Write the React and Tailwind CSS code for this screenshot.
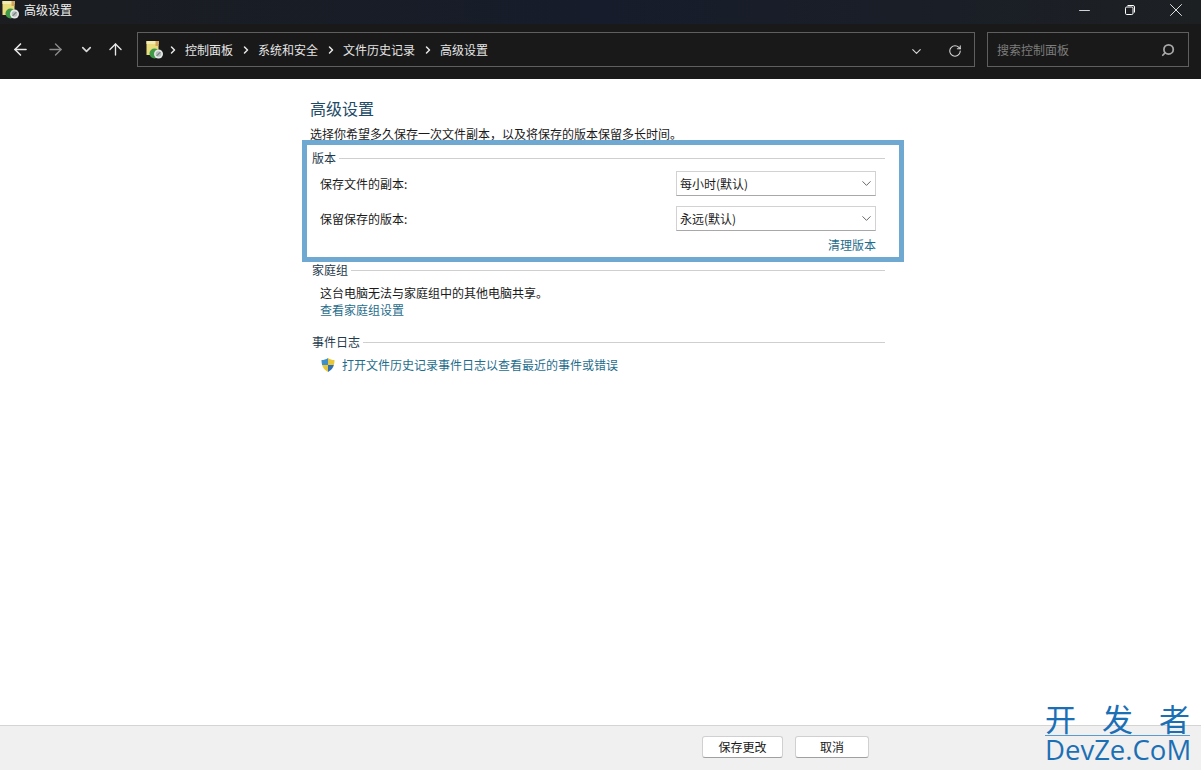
import { ArrowLeft, ArrowRight, ArrowUp, ChevronDown, ChevronRight, Minus, RotateCw, Search, X } from "lucide-react";

const font = { fontFamily: '"Noto Sans CJK SC", "Noto Sans", sans-serif' };

function HistoryIcon({ className = "" }) {
  return (
    <svg width="18" height="18" viewBox="0 0 18 18" className={"shrink-0 " + className}>
      <rect x="0.5" y="0" width="12" height="14" fill="#e9dc7c" />
      <path d="M0.5 0h12v3h-12z" fill="#f3ecae" />
      <path d="M9.500 0h3v5h-3z" fill="#d2a45c" />
      <circle cx="8.500" cy="12.500" r="5" fill="#3f9a47" />
      <circle cx="12.500" cy="13" r="4.500" fill="#e4e8e6" />
      <circle cx="12.500" cy="13" r="2.800" fill="#b4bdbb" />
      <path d="M10.800 14.800l3.400-3.600" stroke="#56625f" strokeWidth="1" fill="none" />
    </svg>
  );
}

function RestoreIcon() {
  return (
    <svg width="12" height="12" viewBox="0 0 12 12" fill="none" stroke="#ffffff" strokeWidth="1">
      <rect x="1.500" y="3" width="7.500" height="7.500" rx="1.200" />
      <path d="M3.500 1.500h5.500a1.500 1.500 0 0 1 1.500 1.500v5.500" />
    </svg>
  );
}

function ShieldIcon() {
  return (
    <svg width="16" height="16" viewBox="0 0 16 16" className="shrink-0">
      <path d="M8 1c2 1.400 4 2 6.500 2 0 2-.2 3.500-.6 5H8V1z" fill="#e8c83a" />
      <path d="M8 8H2.100c.8 3 2.600 5.300 5.900 7V8z" fill="#e8c83a" />
      <path d="M8 8h5.900c-.8 3-2.600 5.300-5.900 7V8z" fill="#2f6fb5" />
      <path d="M8 1C6 2.400 4 3 1.500 3c0 1.800.2 3.500.6 5H8V1z" fill="#3f8fc9" />
    </svg>
  );
}

function Crumb({ children }) {
  return (
    <>
      <ChevronRight size={12} strokeWidth={3} className="text-[#e8e8e8] shrink-0" />
      <span className="text-[12px] text-[#e6e6e6]">{children}</span>
    </>
  );
}

function SectionTitle({ children }) {
  return (
    <div className="flex items-center gap-[3px] pl-[2px] h-[18px]">
      <span className="text-[12px] text-[#1e3a4c] whitespace-nowrap">{children}</span>
      <div className="flex-1 h-px bg-[#cfcfcf]" />
    </div>
  );
}

function Dropdown({ value }) {
  return (
    <div className="w-[200px] h-[25px] flex items-center justify-between pl-[3px] pr-[1px] bg-white border border-[#d2d2d2] border-b-[#a8a8a8] text-[12px] text-[#1a1a1a]">
      <span>{value}</span>
      <ChevronDown size={15} strokeWidth={1.3} className="text-[#444444]" />
    </div>
  );
}

function Row({ label, value }) {
  return (
    <div className="flex items-center justify-between pl-[10px] pr-[9px] h-[25px]">
      <span className="text-[12px] text-[#1a1a1a]">{label}</span>
      <Dropdown value={value} />
    </div>
  );
}

export default function App() {
  return (
    <div className="relative w-[1201px] h-[770px] flex flex-col bg-white overflow-hidden" style={font}>
      <div className="h-[24px] shrink-0 flex items-center justify-between pb-[4px] bg-gradient-to-r from-[#1b1d20] via-[#161c2b] to-[#1d2023]">
        <div className="flex items-center gap-[4px] pl-[2px]">
          <HistoryIcon />
          <span className="text-[12px] text-[#f0f0f0]">高级设置</span>
        </div>
        <div className="flex items-center pr-[2px]">
          <div className="w-[46px] flex justify-center"><Minus size={17} strokeWidth={1.2} className="text-[#f2f2f2]" /></div>
          <div className="w-[46px] flex justify-center"><RestoreIcon /></div>
          <div className="w-[46px] flex justify-center"><X size={22} strokeWidth={1} className="text-[#f2f2f2]" /></div>
        </div>
      </div>

      <div className="h-[55px] shrink-0 flex items-center bg-[#191919] pb-[4px]">
        <div className="w-[137px] shrink-0 flex items-center pl-[11px]">
          <ArrowLeft size={19} strokeWidth={2} className="text-[#e8e8e8]" />
          <ArrowRight size={19} strokeWidth={1.7} className="text-[#8c8c8c] ml-[16px]" />
          <ChevronDown size={15} strokeWidth={2.6} className="text-[#d8d8d8] ml-[14px]" />
          <ArrowUp size={19} strokeWidth={1.7} className="text-[#e8e8e8] ml-[12px]" />
        </div>
        <div className="w-[838px] h-[35px] shrink-0 flex items-center border border-[#5f5f5f] pl-[8px] pr-[12px] gap-[6.5px]">
          <HistoryIcon className="-mr-[4px]" />
          <Crumb>控制面板</Crumb>
          <Crumb>系统和安全</Crumb>
          <Crumb>文件历史记录</Crumb>
          <Crumb>高级设置</Crumb>
          <ChevronDown size={15} strokeWidth={1.8} className="ml-auto mr-[18px] mt-[3px] text-[#d8d8d8]" />
          <RotateCw size={14} strokeWidth={1.8} className="mt-[3px] text-[#d8d8d8]" />
        </div>
        <div className="w-[202px] h-[35px] ml-[12px] shrink-0 flex items-center justify-between border border-[#5f5f5f] pl-[9px] pr-[13px]">
          <span className="text-[12px] text-[#7d7d7d]">搜索控制面板</span>
          <Search size={14} strokeWidth={3} className="text-[#a8a8a8] -scale-x-100" />
        </div>
      </div>

      <div className="flex-1 pl-[310px] pr-[316px] pt-[18px]">
        <h1 className="text-[16px] leading-[22px] text-[#1d4a66]">高级设置</h1>
        <p className="mt-[6px] text-[12px] leading-[18px] text-[#1a1a1a] whitespace-nowrap">选择你希望多久保存一次文件副本，以及将保存的版本保留多长时间。</p>

        <div className="mt-[6px]">
          <SectionTitle>版本</SectionTitle>
          <div className="mt-[4px] flex flex-col gap-[10px]">
            <Row label="保存文件的副本:" value="每小时(默认)" />
            <Row label="保留保存的版本:" value="永远(默认)" />
          </div>
          <div className="mt-[5px] pr-[9px] text-right text-[12px] leading-[18px] text-[#1f6d8c]">清理版本</div>
        </div>

        <div className="mt-[7px]">
          <SectionTitle>家庭组</SectionTitle>
          <p className="mt-[5px] pl-[10px] text-[12px] leading-[17px] text-[#1a1a1a]">这台电脑无法与家庭组中的其他电脑共享。</p>
          <p className="pl-[10px] text-[12px] leading-[17px] text-[#1f6d8c]">查看家庭组设置</p>
        </div>

        <div className="mt-[15px]">
          <SectionTitle>事件日志</SectionTitle>
          <div className="mt-[5px] pl-[10px] flex items-center gap-[6px] h-[18px]">
            <ShieldIcon />
            <span className="text-[12px] text-[#1f6d8c] whitespace-nowrap">打开文件历史记录事件日志以查看最近的事件或错误</span>
          </div>
        </div>
      </div>

      <div className="h-[45px] shrink-0 flex items-center bg-[#f0f0f0] border-t border-[#d4d4d4] pl-[702px] pb-[2px] gap-[12px]">
        <button className="w-[81px] h-[22px] bg-white rounded-[3px] border border-[#d0d0d0] border-b-[#a0a0a0] text-[12px] leading-[18px] text-[#1a1a1a]">保存更改</button>
        <button className="w-[74px] h-[22px] bg-white rounded-[3px] border border-[#d0d0d0] border-b-[#a0a0a0] text-[12px] leading-[18px] text-[#1a1a1a]">取消</button>
      </div>

      {/* highlight drawn over the screenshot */}
      <div className="absolute left-[302px] top-[140px] w-[602px] h-[122px] border-[5px] border-[#6fa9d2]" />

      {/* watermark */}
      <div className="absolute left-[1045px] top-[701px] w-[145px] flex flex-col items-stretch text-[#1b6fb5]">
        <div className="flex justify-between text-[31px] leading-[34px] border-b border-[#5a9bd0]">
          <span>开</span><span>发</span><span>者</span>
        </div>
        <div className="text-[27.5px] leading-[27px] whitespace-nowrap" style={{ fontFamily: '"Open Sans", sans-serif' }}>DevZe.CoM</div>
      </div>
    </div>
  );
}
